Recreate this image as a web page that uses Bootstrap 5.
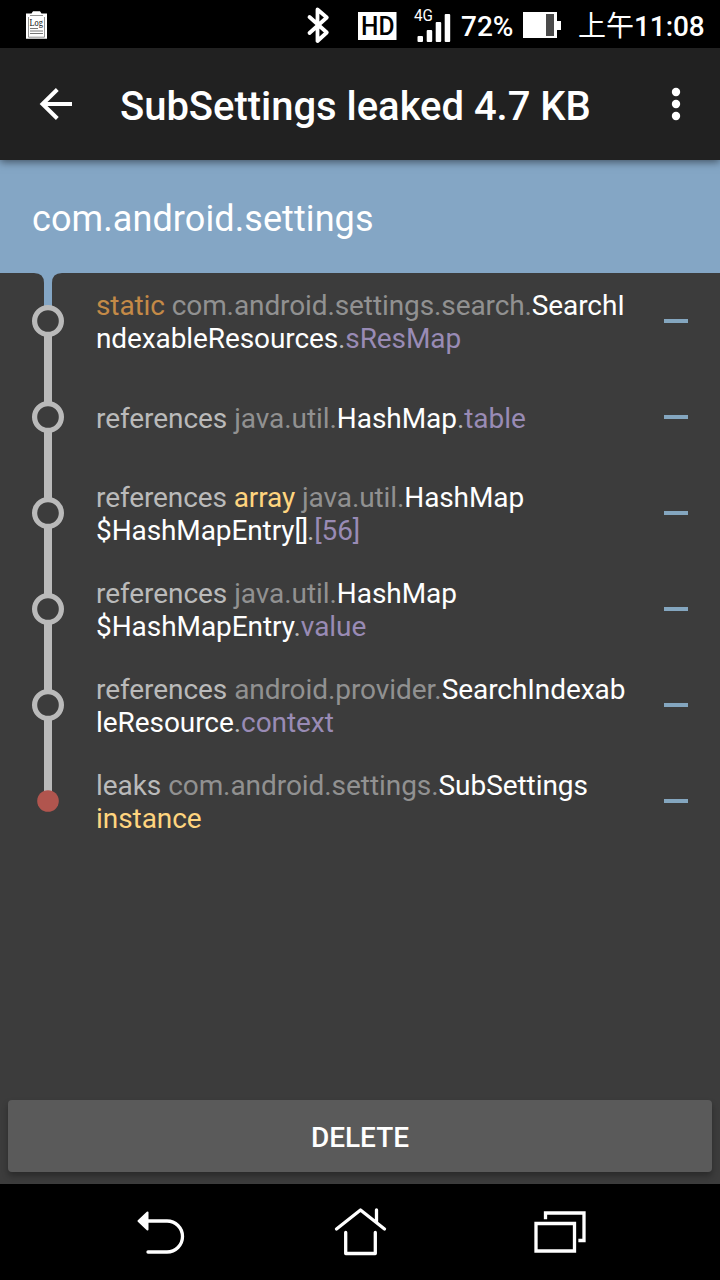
<!DOCTYPE html>
<html lang="en">
<head>
<meta charset="utf-8">
<meta name="viewport" content="width=device-width, initial-scale=1">
<title>SubSettings leaked 4.7 KB</title>
<link rel="stylesheet" href="https://cdn.jsdelivr.net/npm/bootstrap@5.3.0/dist/css/bootstrap.min.css">
<style>
body{font-family:Roboto,"Noto Sans CJK TC",sans-serif;height:1280px;background:#3c3c3c;overflow:hidden}
svg{display:block;flex:none}
.status{height:48px;background:#000;color:#fff}
.status-text{font-size:28px;line-height:48px;font-weight:500;padding-top:3px;height:48px}
.meridiem{font-weight:400}
.toolbar{height:112px;background:#212121;box-shadow:0 2px 8px rgba(0,0,0,.5);z-index:2}
.toolbar-title{font-size:40px;line-height:48px;font-weight:500;color:#fff;margin:6px 0 0 48px;white-space:nowrap;letter-spacing:-.03px}
.pkg{height:113px;background:#84a6c5;color:#fff;font-size:36px;padding:4px 32px 0;letter-spacing:.09px}
.trace-row{height:96px}
.trace-text{font-size:28px;line-height:33px;color:#bababa;padding-top:2px;letter-spacing:-.06px}
.tight{letter-spacing:-.1px}
.brackets{letter-spacing:-1.2px}
.dash{width:24px;height:4px;background:#84a6bf;margin-right:32px}
.c-static{color:#c48a47}.c-pkg{color:#919191}.c-class{color:#fff}.c-field{color:#998bb5}.c-extra{color:#ffd57f}
.btn-delete{height:72px;margin:0 8px 12px;background:#5a5a5a;color:#fff;font-size:28px;font-weight:500;border:0;border-radius:4px;box-shadow:0 4px 6px rgba(0,0,0,.3);padding:4px 0 0}
.navkeys{height:96px;background:#000}
</style>
</head>
<body class="d-flex flex-column">
<header class="status d-flex align-items-start flex-shrink-0">
  <svg width="281" height="48" viewBox="0 0 281 48">
    <path fill="#fff" d="M26 13.500h5.500l1.500-2.300h7l1.500 2.300H47V38.700H26z"/>
    <path d="M28.500 17v20.200h16V17M30 15.500h13" fill="none" stroke="#777" stroke-width=".8"/>
    <path d="M30 28.500h8M30 31h13M30 33.500h13" stroke="#777" stroke-width="1"/>
    <text x="29.500" y="26.300" font-family="Liberation Serif, serif" font-size="10" textLength="13.500" lengthAdjust="spacingAndGlyphs" fill="#111">Log</text>
  </svg>
  <svg width="77" height="48" viewBox="281 0 77 48"><path d="M309.500 17l17.300 15.500-9.300 8.500V9.500l9.300 8-17.300 15.500" fill="none" stroke="#fff" stroke-width="3.800" stroke-linecap="round" stroke-linejoin="round"/></svg>
  <svg width="103" height="48" viewBox="358 0 103 48" fill="#fff">
    <path d="M358 12h38.500v28H358z"/>
    <text x="361" y="35" font-family="Roboto, sans-serif" font-weight="500" font-size="26" textLength="33.500" lengthAdjust="spacingAndGlyphs" fill="#000">HD</text>
    <text x="414" y="20.500" font-family="Roboto, sans-serif" font-size="17" textLength="19" lengthAdjust="spacingAndGlyphs">4G</text>
    <rect x="417.500" y="36" width="5.500" height="6" rx="1"/><rect x="426.700" y="30" width="5.500" height="12" rx="1"/><rect x="435.700" y="22" width="5.500" height="20" rx="1"/><rect x="444.700" y="14" width="5.500" height="28" rx="1"/>
  </svg>
  <span class="status-text" style="width:62px">72%</span>
  <svg width="55" height="48" viewBox="523 0 55 48"><path fill="#fff" d="M523 12h34v9h4v9h-4v8h-34z"/><path fill="#4a4a4a" d="M546 14h8v22h-8z"/></svg>
  <span class="status-text text-nowrap"><span class="meridiem">上午</span><span class="tight">11:08</span></span>
</header>
<nav class="toolbar d-flex align-items-center flex-shrink-0 position-relative">
  <svg width="72" height="112" viewBox="0 48 72 112"><path d="M72 104H43M57.300 89.500L42.500 104l14.800 14.500" fill="none" stroke="#fff" stroke-width="4"/></svg>
  <h1 class="toolbar-title">SubSettings leaked 4.7 KB</h1>
  <svg class="ms-auto" width="56" height="112" viewBox="664 48 56 112" fill="#fff"><circle cx="676" cy="92" r="4.200"/><circle cx="676" cy="104" r="4.200"/><circle cx="676" cy="116" r="4.200"/></svg>
</nav>
<section class="pkg d-flex align-items-center flex-shrink-0">com.android.settings</section>
<main class="flex-grow-1">
  <div class="trace-row d-flex align-items-center">
    <svg width="96" height="96"><path fill="#84a6c5" d="M34 0Q44 0 44 10V34h8V10Q52 0 62 0z"/><path fill="#bababa" d="M44 61h8v35h-8z"/><circle cx="48" cy="48" r="13.400" fill="none" stroke="#bababa" stroke-width="5.200"/></svg>
    <div class="trace-text tight text-nowrap"><span class="c-static">static</span> <span class="c-pkg">com.android.settings.search.</span><span class="c-class">SearchI<br>ndexableResources</span>.<span class="c-field">sResMap</span></div>
    <div class="dash ms-auto"></div>
  </div>
  <div class="trace-row d-flex align-items-center">
    <svg width="96" height="96"><path fill="#bababa" d="M44 0h8v35h-8zM44 61h8v35h-8z"/><circle cx="48" cy="48" r="13.400" fill="none" stroke="#bababa" stroke-width="5.200"/></svg>
    <div class="trace-text text-nowrap">references <span class="c-pkg">java.util.</span><span class="c-class">HashMap</span>.<span class="c-field">table</span></div>
    <div class="dash ms-auto"></div>
  </div>
  <div class="trace-row d-flex align-items-center">
    <svg width="96" height="96"><path fill="#bababa" d="M44 0h8v35h-8zM44 61h8v35h-8z"/><circle cx="48" cy="48" r="13.400" fill="none" stroke="#bababa" stroke-width="5.200"/></svg>
    <div class="trace-text tight text-nowrap">references <span class="c-extra">array</span> <span class="c-pkg">java.util.</span><span class="c-class">HashMap<br>$HashMapEntry<span class="brackets">[]</span></span>.<span class="c-field">[56]</span></div>
    <div class="dash ms-auto"></div>
  </div>
  <div class="trace-row d-flex align-items-center">
    <svg width="96" height="96"><path fill="#bababa" d="M44 0h8v35h-8zM44 61h8v35h-8z"/><circle cx="48" cy="48" r="13.400" fill="none" stroke="#bababa" stroke-width="5.200"/></svg>
    <div class="trace-text text-nowrap">references <span class="c-pkg">java.util.</span><span class="c-class">HashMap<br>$HashMapEntry</span>.<span class="c-field">value</span></div>
    <div class="dash ms-auto"></div>
  </div>
  <div class="trace-row d-flex align-items-center">
    <svg width="96" height="96"><path fill="#bababa" d="M44 0h8v35h-8zM44 61h8v35h-8z"/><circle cx="48" cy="48" r="13.400" fill="none" stroke="#bababa" stroke-width="5.200"/></svg>
    <div class="trace-text text-nowrap">references <span class="c-pkg">android.provider.</span><span class="c-class">SearchIndexab<br>leResource</span>.<span class="c-field">context</span></div>
    <div class="dash ms-auto"></div>
  </div>
  <div class="trace-row d-flex align-items-center">
    <svg width="96" height="96"><path fill="#bababa" d="M44 0h8v40h-8z"/><circle cx="48" cy="48" r="10.800" fill="#b1554e"/></svg>
    <div class="trace-text text-nowrap">leaks <span class="c-pkg">com.android.settings.</span><span class="c-class">SubSettings</span><br><span class="c-extra">instance</span></div>
    <div class="dash ms-auto"></div>
  </div>
</main>
<button type="button" class="btn btn-delete flex-shrink-0">DELETE</button>
<footer class="navkeys flex-shrink-0">
  <svg width="720" height="96" viewBox="0 1184 720 96" fill="none" stroke="#fff" stroke-width="3.300" stroke-linecap="round" stroke-linejoin="round">
    <path d="M148 1221h19a15.500 15.500 0 0 1 0 31h-19"/><path d="M138.500 1221l9-8.500v17z" fill="#fff" stroke-width="2"/>
    <path d="M336.500 1229l24-19 24 19M376.500 1210v12M345.700 1232.500v21h29.600v-21"/>
    <path d="M536 1223.500h38.500v27.500H536zM545.500 1217.500V1213H584v27.500h-4" stroke-linecap="square" stroke-linejoin="miter"/>
  </svg>
</footer>
<script src="https://cdn.jsdelivr.net/npm/bootstrap@5.3.0/dist/js/bootstrap.bundle.min.js"></script>
</body>
</html>
